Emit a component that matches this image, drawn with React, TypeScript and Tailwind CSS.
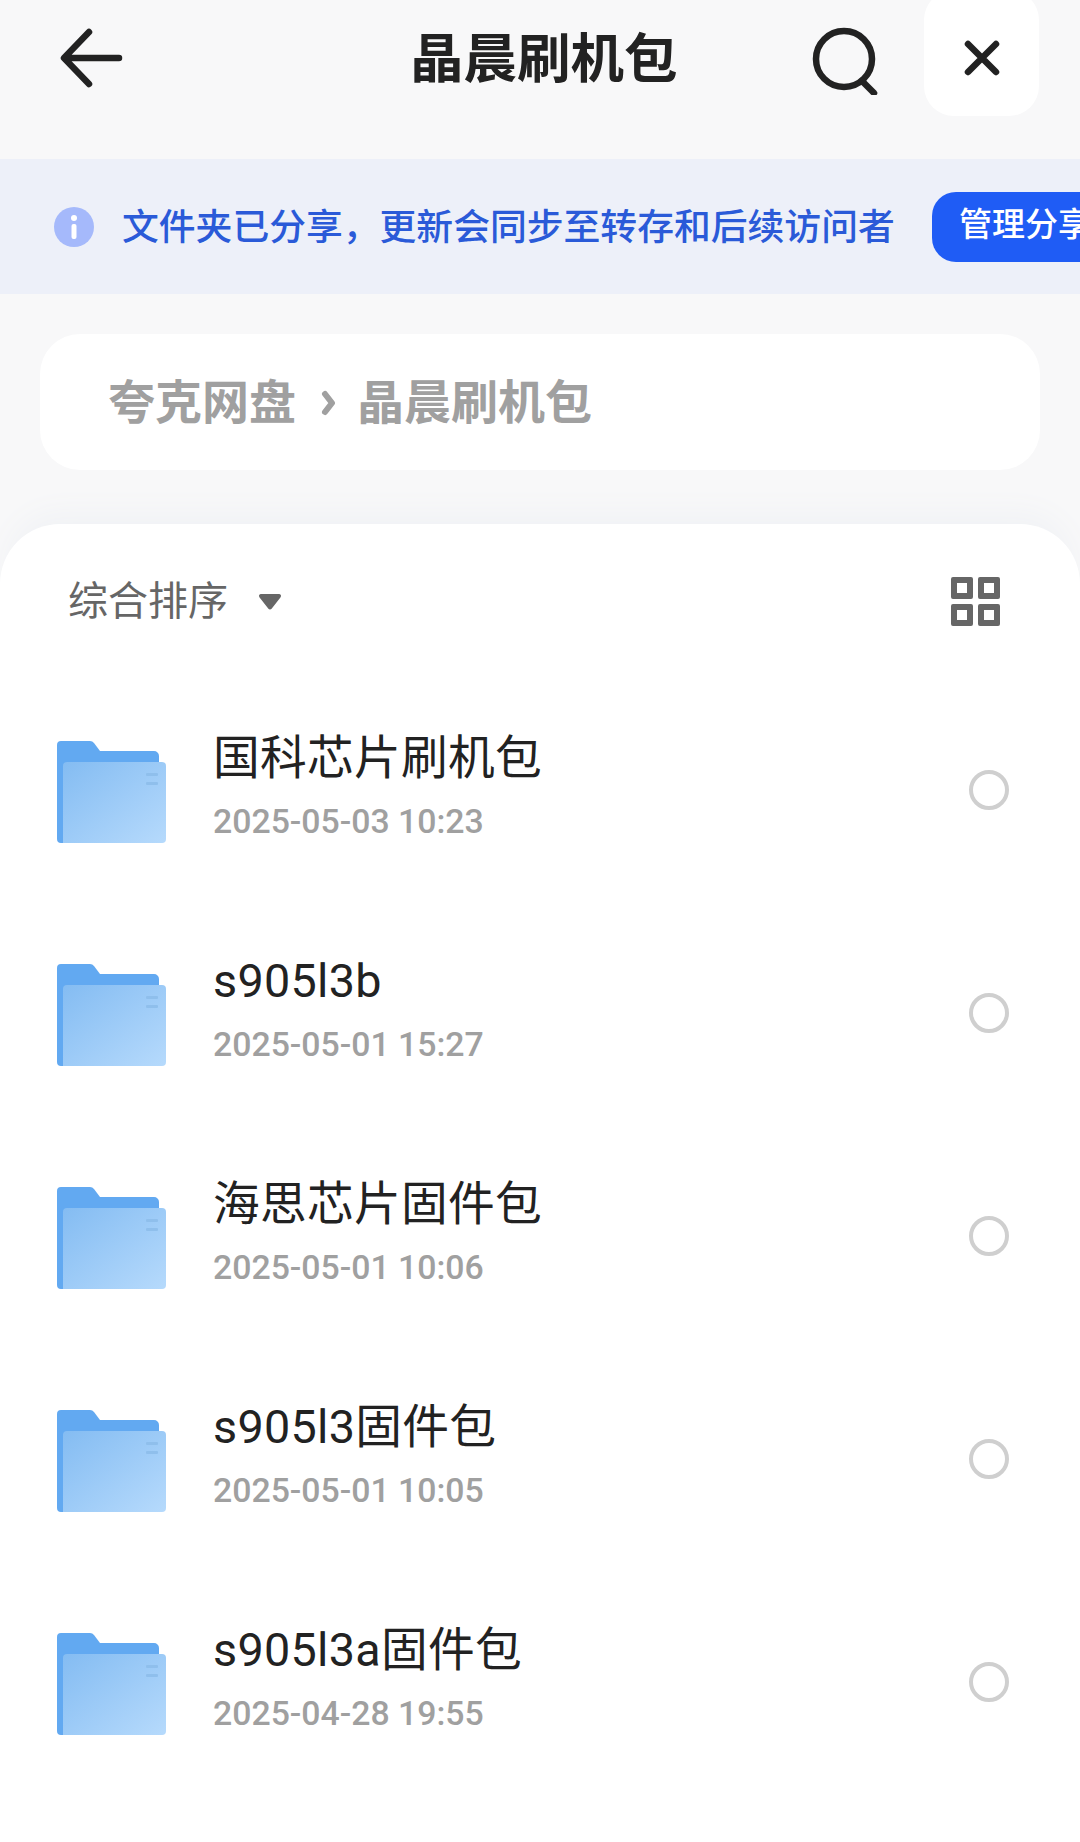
import React from "react";

const files = [
  { name: "国科芯片刷机包", time: "2025-05-03 10:23" },
  { name: "s905l3b", time: "2025-05-01 15:27" },
  { name: "海思芯片固件包", time: "2025-05-01 10:06" },
  { name: "s905l3固件包", time: "2025-05-01 10:05" },
  { name: "s905l3a固件包", time: "2025-04-28 19:55" }
];

const FolderIcon = ({ id }: { id: string }) => (
  <svg width="110" height="102" viewBox="0 0 110 102" className="shrink-0">
    <defs>
      <linearGradient id={id} x1="0" y1="0" x2="1" y2="1">
        <stop offset="0" stopColor="#84bcf2" />
        <stop offset="1" stopColor="#b6dafc" />
      </linearGradient>
    </defs>
    <path
      d="M0 4a4 4 0 0 1 4-4h29a5 5 0 0 1 4 2l6 8h54a5 5 0 0 1 5 5v87H4a4 4 0 0 1-4-4z"
      fill="#62a9f1"
    />
    <path d="M6 25a4 4 0 0 1 4-4h95a4 4 0 0 1 4 4v73a4 4 0 0 1-4 4H6z" fill={`url(#${id})`} />
    <rect x="89" y="32" width="12" height="3" rx="1" fill="#8fbfec" />
    <rect x="89" y="41" width="12" height="3" rx="1" fill="#8fbfec" />
  </svg>
);

const FileRow = ({ name, time, id }: { name: string; time: string; id: string }) => (
  <div className="flex h-[223px] items-center pl-[57px] pr-[71px]">
    <FolderIcon id={id} />
    <div className="ml-[46px] flex h-full min-w-0 flex-1 flex-col pt-[49px]">
      <div className="h-[58px] text-[46.7px] leading-[58px] tracking-[0.3px] text-[#222]">{name}</div>
      <div className="mt-[15px] h-[40px] text-[33.8px] font-medium leading-[40px] text-[#a0a0a0]">
        {time}
      </div>
    </div>
    <div className="-mt-[3px] h-10 w-10 rounded-full border-4 border-[#cfcfcf]" />
  </div>
);

const App = () => {
  return (
    <div className="flex h-[1842px] w-[1080px] flex-col overflow-hidden bg-[#f8f8f9] font-['Roboto','Noto_Sans_CJK_SC',sans-serif]">
      {/* top bar */}
      <div className="flex h-[159px] shrink-0 items-start pl-[60px] pr-10">
        <svg width="64" height="60" viewBox="0 0 64 60" className="mt-[28px] shrink-0" fill="none" stroke="#222" strokeWidth="6.5" strokeLinecap="round" strokeLinejoin="round">
          <path d="M59 30H5M29 4 4 30l25 26" />
        </svg>
        <div className="ml-[286px] mt-[26px] w-[268px] text-[53.5px] font-bold leading-[68px] text-[#222]">晶晨刷机包</div>
        <svg width="68" height="68" viewBox="0 0 68 68" className="ml-[134px] mt-[27px] shrink-0" fill="none" stroke="#222" strokeWidth="6.5">
          <circle cx="32" cy="32" r="28" />
          <path d="m50 54 12 12" strokeLinecap="round" />
        </svg>
        <div className="-mt-[10px] ml-[44px] flex h-[126px] w-[115px] shrink-0 items-center justify-center rounded-[30px] bg-white pt-[10px]">
          <svg width="36" height="36" viewBox="0 0 36 36" fill="none" stroke="#222" strokeWidth="6.5" strokeLinecap="round">
            <path d="m4 4 28 28M32 4 4 32" />
          </svg>
        </div>
      </div>

      {/* share notice */}
      <div className="flex h-[135px] shrink-0 items-center overflow-hidden bg-[#edf0f9] pl-[54px]">
        <svg width="40" height="40" viewBox="0 0 40 40" className="shrink-0">
          <circle cx="20" cy="20" r="20" fill="#a5b9fb" />
          <circle cx="20" cy="11" r="3" fill="#fff" />
          <rect x="17.5" y="17" width="5" height="15" rx="2" fill="#fff" />
        </svg>
        <div className="ml-[28px] w-[773px] shrink-0 whitespace-nowrap pt-[3px] text-[36.8px] font-medium text-[#2a5ad8]">
          文件夹已分享，更新会同步至转存和后续访问者
        </div>
        <div className="ml-[37px] flex h-[70px] w-[200px] shrink-0 items-center whitespace-nowrap rounded-l-[24px] bg-[#1f5cf5] pb-[3px] pl-[27px] text-[33px] font-medium text-white">
          管理分享
        </div>
      </div>

      {/* breadcrumb */}
      <div className="mx-10 mt-[40px] flex h-[136px] shrink-0 items-center rounded-[40px] bg-white pl-[68px] pt-[2px] text-[47px] font-bold text-[#a0a0a0]">
        <span>夸克网盘</span>
        <svg width="16" height="28" viewBox="0 0 16 28" className="ml-[25px] mr-[20px]" fill="none" stroke="#a0a0a0" strokeWidth="6" strokeLinecap="round" strokeLinejoin="round">
          <path d="m4 5 7 9-7 9" />
        </svg>
        <span>晶晨刷机包</span>
      </div>

      {/* file list */}
      <div className="mt-[54px] flex-1 rounded-t-[60px] bg-white shadow-[0_-20px_30px_-10px_#f0f2f5]">
        <div className="flex h-[156px] items-center justify-between pl-[68px] pr-20">
          <div className="flex items-center text-[40px] text-[#666]">
            <span>综合排序</span>
            <svg width="24" height="18" viewBox="0 0 24 18" className="ml-[30px]">
              <path d="M3 1h18a2 2 0 0 1 1.6 3.2l-9 11.5a2 2 0 0 1-3.2 0l-9-11.5A2 2 0 0 1 3 1z" fill="#666" />
            </svg>
          </div>
          <div className="grid -translate-y-px grid-cols-2 gap-[5px]">
            {[0, 1, 2, 3].map((i) => (
              <div key={i} className="h-[22px] w-[22px] rounded-[2px] border-[6px] border-[#666]" />
            ))}
          </div>
        </div>
        {files.map((file, i) => (
          <FileRow key={file.time} id={`folder-${i}`} name={file.name} time={file.time} />
        ))}
      </div>
    </div>
  );
};

export default App;
